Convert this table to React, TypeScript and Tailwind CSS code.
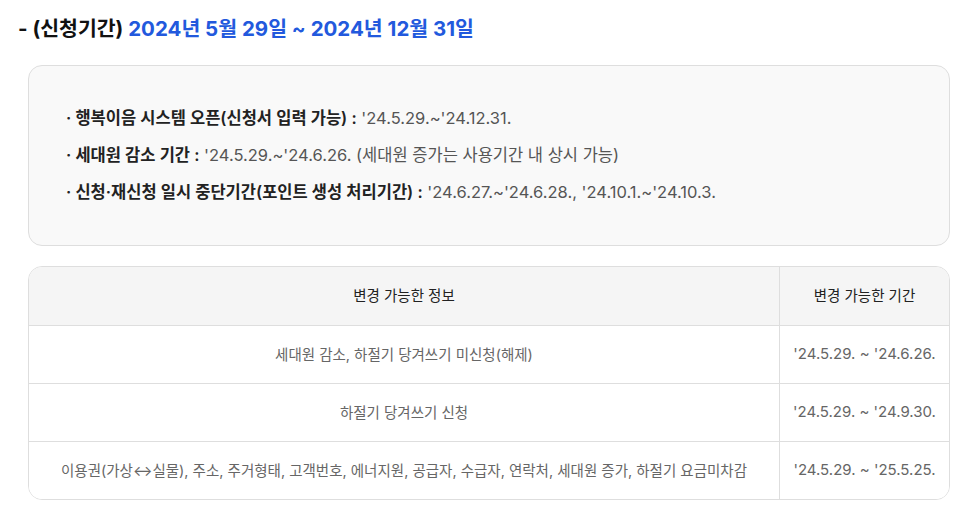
import React from 'react'

const font = { fontFamily: 'Inter, "Noto Sans CJK KR", sans-serif' }

const notices = [
  { label: '행복이음 시스템 오픈(신청서 입력 가능) :', value: " '24.5.29.~'24.12.31." },
  { label: '세대원 감소 기간 :', value: " '24.5.29.~'24.6.26. (세대원 증가는 사용기간 내 상시 가능)" },
  { label: '신청·재신청 일시 중단기간(포인트 생성 처리기간) :', value: " '24.6.27.~'24.6.28., '24.10.1.~'24.10.3." },
]

const rows = [
  { info: '세대원 감소, 하절기 당겨쓰기 미신청(해제)', period: "'24.5.29. ~ '24.6.26." },
  { info: '하절기 당겨쓰기 신청', period: "'24.5.29. ~ '24.9.30." },
  {
    info: '이용권(가상↔실물), 주소, 주거형태, 고객번호, 에너지원, 공급자, 수급자, 연락처, 세대원 증가, 하절기 요금미차감',
    period: "'24.5.29. ~ '25.5.25.",
  },
]

export default function App() {
  return (
    <div className="w-[973px] h-[520px] bg-white pl-[18px] pr-[23px] pt-[16px]" style={font}>
      <h2 className="text-[20.5px] font-bold leading-[26px] text-[#111]">
        - (신청기간) <span className="text-[#2259dd]">2024년 5월 29일 ~ 2024년 12월 31일</span>
      </h2>

      <div className="ml-[10px] mt-[23px] rounded-[14px] border border-[#dedede] bg-[#f9f9f9] py-[34px] pl-[37px]">
        {notices.map((n) => (
          <p key={n.label} className="text-[16.5px] leading-[37px] text-[#555]">
            <span className="font-semibold text-[#222]">· {n.label}</span>
            {n.value}
          </p>
        ))}
      </div>

      <div className="ml-[10px] mt-[20px] overflow-hidden rounded-[14px] border border-[#dedede]">
        <div className="grid grid-cols-[1fr_169px] bg-[#f5f5f5] text-[14.5px] text-[#222]">
          <div className="flex h-[58px] items-center justify-center border-r border-[#dedede]">변경 가능한 정보</div>
          <div className="flex h-[58px] items-center justify-center">변경 가능한 기간</div>
        </div>
        {rows.map((r) => (
          <div key={r.period} className="grid grid-cols-[1fr_169px] border-t border-[#dedede] bg-white">
            <div className="flex h-[57px] items-center justify-center border-r border-[#dedede] text-[14.5px] text-[#666]">
              {r.info}
            </div>
            <div className="flex h-[57px] items-center justify-center text-[15px] text-[#666]">{r.period}</div>
          </div>
        ))}
      </div>
    </div>
  )
}
